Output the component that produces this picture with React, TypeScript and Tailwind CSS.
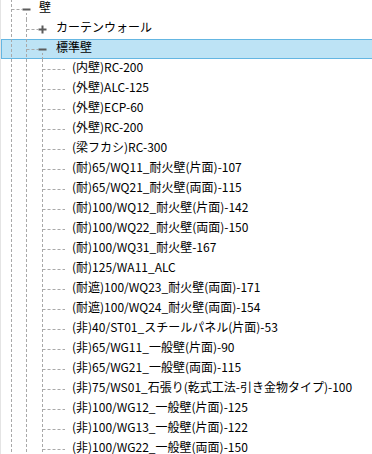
const GUIDE = [10.5, 25.5, 41.5];
const TEXT_X = [38, 55, 71];
const LINE = '#a9a9a9';
const DASH = '3 2';

type Kind = 'open' | 'closed' | 'leaf';

type Node = {
    label: string;
    level: number;
    kind: Kind;
    selected?: boolean;
};

const children = [
    '(内壁)RC-200',
    '(外壁)ALC-125',
    '(外壁)ECP-60',
    '(外壁)RC-200',
    '(梁フカシ)RC-300',
    '(耐)65/WQ11_耐火壁(片面)-107',
    '(耐)65/WQ21_耐火壁(両面)-115',
    '(耐)100/WQ12_耐火壁(片面)-142',
    '(耐)100/WQ22_耐火壁(両面)-150',
    '(耐)100/WQ31_耐火壁-167',
    '(耐)125/WA11_ALC',
    '(耐遮)100/WQ23_耐火壁(両面)-171',
    '(耐遮)100/WQ24_耐火壁(両面)-154',
    '(非)40/ST01_スチールパネル(片面)-53',
    '(非)65/WG11_一般壁(片面)-90',
    '(非)65/WG21_一般壁(両面)-115',
    '(非)75/WS01_石張り(乾式工法-引き金物タイプ)-100',
    '(非)100/WG12_一般壁(片面)-125',
    '(非)100/WG13_一般壁(片面)-122',
    '(非)100/WG22_一般壁(両面)-150',
];

const rows: Node[] = [
    { label: '壁', level: 0, kind: 'open' },
    { label: 'カーテンウォール', level: 1, kind: 'closed' },
    { label: '標準壁', level: 1, kind: 'open', selected: true },
    ...children.map((label) => ({ label, level: 2, kind: 'leaf' as Kind })),
];

// dashed connectors + expander glyph for one row
function Connector({ level, kind }: { level: number; kind: Kind }) {
    const width = TEXT_X[level];
    const iconX = GUIDE[level + 1] ?? GUIDE[level] + 16;
    const verticals = GUIDE.slice(0, level + 1);

    return (
        <svg width={width} height={20} className="shrink-0 block">
            {verticals.map((x) => (
                <line key={x} x1={x} y1={0} x2={x} y2={20} stroke={LINE} strokeDasharray={DASH} />
            ))}
            {kind === 'leaf' ? (
                <line x1={GUIDE[level]} y1={10.5} x2={64} y2={10.5} stroke={LINE} strokeDasharray={DASH} />
            ) : (
                <>
                    <line x1={GUIDE[level]} y1={10.5} x2={iconX - 4.5} y2={10.5} stroke={LINE} strokeDasharray={DASH} />
                    <rect x={iconX - 4} y={9.5} width={8} height={2} fill="#5c5c5c" />
                    {kind === 'closed' && <rect x={iconX - 1} y={6.5} width={2} height={8} fill="#5c5c5c" />}
                    {kind === 'open' && (
                        <line x1={iconX} y1={14} x2={iconX} y2={20} stroke={LINE} strokeDasharray="2 2" />
                    )}
                </>
            )}
        </svg>
    );
}

export default function App() {
    return (
        <div
            className="w-[372px] h-[454px] overflow-hidden bg-white border-l border-[#e4e4e4]"
            style={{ fontFamily: '"Noto Sans CJK JP", "Noto Sans", sans-serif' }}
        >
            <div className="-mt-px flex flex-col">
                {rows.map((row, i) => (
                    <div key={i} className="relative h-5 flex items-start">
                        {row.selected && (
                            <div className="absolute inset-y-0 left-0 -right-2 bg-[#bde3f5] border border-[#64b6e2]" />
                        )}
                        <div className="relative flex items-start">
                            <Connector level={row.level} kind={row.kind} />
                            <span className="text-[12px] leading-[16px] text-black whitespace-nowrap">{row.label}</span>
                        </div>
                    </div>
                ))}
            </div>
        </div>
    );
}
